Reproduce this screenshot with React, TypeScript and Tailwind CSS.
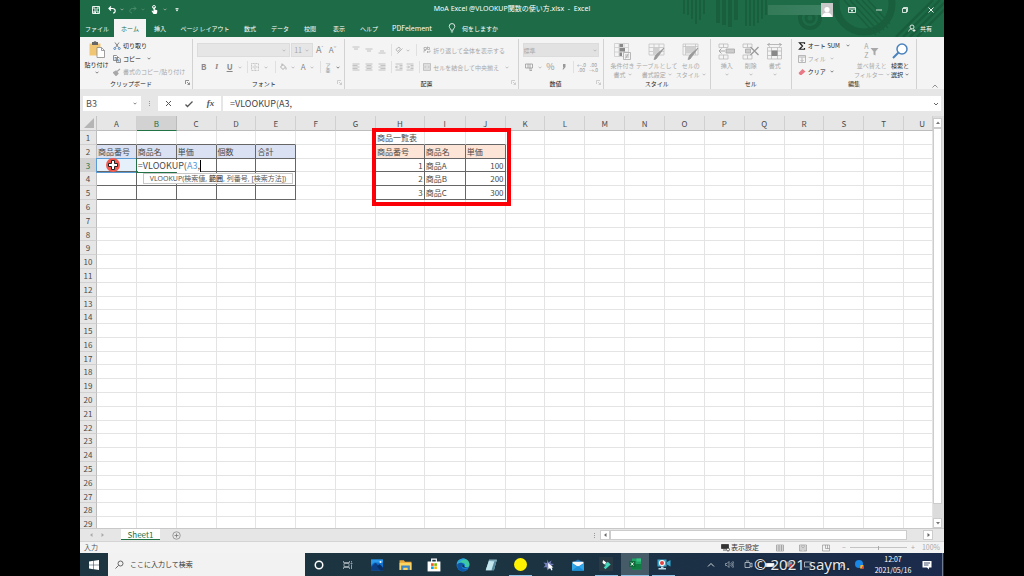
import { useState, type ReactNode } from "react";

const COLS = "ABCDEFGHIJKLMNOPQRSTU".split("");
const ROWS = Array.from({ length: 29 }, (_, i) => i + 1);

const VALUES: Record<string, string> = {
  A2: "商品番号", B2: "商品名", C2: "単価", D2: "個数", E2: "合計",
  H1: "商品一覧表",
  H2: "商品番号", I2: "商品名", J2: "単価",
  H3: "1", I3: "商品A", J3: "100",
  H4: "2", I4: "商品B", J4: "200",
  H5: "3", I5: "商品C", J5: "300",
};

function Caret({ dark = false, className = "" }: { dark?: boolean; className?: string }) {
  return (
    <svg viewBox="0 0 6 4" className={`h-[3px] w-1 shrink-0 ${dark ? "text-[#666]" : "text-[#b4b4b4]"} ${className}`}>
      <path d="M.8.8 3 3 5.2.8" fill="none" stroke="currentColor" strokeWidth="1.2" />
    </svg>
  );
}

function Ico({ children, className = "size-[9px]", box = "0 0 18 18" }: { children: ReactNode; className?: string; box?: string }) {
  return (
    <svg viewBox={box} className={`shrink-0 ${className}`} fill="none" stroke="currentColor" strokeWidth="1.6">
      {children}
    </svg>
  );
}

function Group({ label, launcher = false, children, dark = false }: { label: string; launcher?: boolean; dark?: boolean; children: ReactNode }) {
  return (
    <section aria-label={label} className="relative my-0.5 flex min-w-0 flex-col border-r border-[#d2d2d2]">
      <div className="flex min-h-0 flex-1">{children}</div>
      <div className={`flex h-2.5 items-center justify-center pb-0.5 text-[6px] text-[#222] ${launcher ? "pr-2.5" : ""}`}>{label}</div>
      {launcher && (
        <button aria-label={`${label}の設定`} className="absolute right-0.5 bottom-1">
          <Ico className={`size-[5px] ${dark ? "text-[#777]" : "text-[#c4c4c4]"}`} box="0 0 10 10">
            <path d="M1 8V1h7M4 4l5 5M9 5v4H5" />
          </Ico>
        </button>
      )}
    </section>
  );
}

function Big({ lines, children, active = false }: { lines: string[]; children: ReactNode; active?: boolean }) {
  return (
    <button className={`flex min-w-0 flex-1 flex-col items-center text-[6px] leading-[9px] whitespace-nowrap ${active ? "text-[#222]" : "text-[#a8a8a8]"}`}>
      <span className="flex h-5 items-center justify-center">{children}</span>
      <span>{lines[0]}</span>
      <span className="flex h-[9px] items-center gap-0.5">
        {lines[1]}
        <Caret dark={active} />
      </span>
    </button>
  );
}

function Tool({ label, w = "w-[13px]", children }: { label: string; w?: string; children: ReactNode }) {
  return (
    <button aria-label={label} className={`flex h-3 shrink-0 items-center justify-center ${w}`}>
      {children}
    </button>
  );
}

const Sep = () => <span className="mx-[3px] h-3 w-px shrink-0 bg-[#e0e0e0]" />;

function Lines({ d }: { d: string }) {
  return (
    <Ico className="size-2" box="0 0 16 16">
      <path d={d} strokeWidth="1.3" />
    </Ico>
  );
}

function TitleBar() {
  return (
    <header className="relative overflow-hidden bg-[#1e6c47] text-white">
      <svg viewBox="0 0 270 37" className="absolute top-0 right-0 h-[37px] w-[270px]" fill="none" stroke="#195f3d">
        <path d="M10 0v14M14 0v15M18 0v19M22 0v24M26 0v20M30 0v14" strokeWidth="2" />
        <path d="M44 0v23M50 0v25M56 0v27M62 0v20" strokeWidth="4" />
        <path d="M72 0v26M76 0v26M80 0v26M84 0v23M88 0v19M92 0v15" strokeWidth="2" />
        <circle cx="136" cy="18" r="10" strokeWidth="4" />
        <circle cx="136" cy="18" r="4" strokeWidth="3" />
        <circle cx="190" cy="4" r="28" strokeWidth="7" />
        <path d="M170 0l32 35M176 0l30 33M182 0l28 30M188 0l26 28M194 0l22 24" strokeWidth="1.5" />
        <path d="M222 37l37-37M229 37l37-37M236 37l37-37M243 37l37-37" strokeWidth="2.5" />
      </svg>
      <div className="relative grid h-[19px] grid-cols-[1fr_auto_1fr] items-center">
        <div className="flex items-center pl-3">
          <button aria-label="上書き保存">
            <Ico className="size-2" box="0 0 16 16">
              <path d="M1 1h14v14H1zM4 1v5h8V1M4 15v-5h8v5" strokeWidth="1.8" />
              <path d="M5 11h3v4H5z" fill="currentColor" stroke="none" />
            </Ico>
          </button>
          <button aria-label="元に戻す" className="ml-2 flex items-center gap-1">
            <Ico className="size-2" box="0 0 16 16">
              <path d="M6 1 2 5l4 4M2 5h7c7 0 7 9 1 9" strokeWidth="2.4" />
            </Ico>
            <Caret className="text-[#9cc0ae]" />
          </button>
          <button aria-label="やり直し" className="ml-[5px] flex items-center gap-1 text-[#4a8a6b]">
            <Ico className="size-2" box="0 0 16 16">
              <path d="m10 1 4 4-4 4M14 5H7c-7 0-7 9-1 9" strokeWidth="2" />
            </Ico>
            <Caret className="opacity-40" />
          </button>
          <button aria-label="タッチ/マウス モードの切り替え" className="ml-[5px] flex items-center gap-1">
            <Ico className="size-[9px]" box="0 0 16 18">
              <circle cx="7" cy="4" r="3" strokeWidth="1.8" />
              <path d="M6 4h2.5v5l5 1.500v4L12 18H6l-4-6 1-1 3 2z" fill="currentColor" stroke="none" />
            </Ico>
            <Caret />
          </button>
          <button aria-label="クイック アクセス ツール バーのカスタマイズ" className="ml-2">
            <Ico className="size-1" box="0 0 8 8"><path d="M1 1h6" /><path d="m1 3 3 4 3-4z" fill="currentColor" stroke="none" /></Ico>
          </button>
        </div>
        <h1 className="font-['Noto_Sans','Noto_Sans_CJK_JP',sans-serif] text-[7px] whitespace-pre">MoA Excel @VLOOKUP関数の使い方.xlsx  -  Excel</h1>
        <div className="flex items-center justify-end">
          <span className="h-2.5 w-[53px] bg-linear-to-r from-[#347a59] to-[#3b8060]" />
          <span className="flex h-3.5 w-3 items-end justify-center bg-[#c9c9c9]">
            <Ico className="size-3" box="0 0 12 12">
              <circle cx="6" cy="4.500" r="2.600" fill="#fff" stroke="none" />
              <path d="M1 12c0-6 10-6 10 0z" fill="#fff" stroke="none" />
            </Ico>
          </span>
          <button aria-label="リボンの表示オプション" className="ml-[15px]">
            <Ico className="h-1.5 w-2" box="0 0 16 12"><path d="M1 1h14v10H1zM1 4h14M8 10V6M6 8l2-2 2 2" /></Ico>
          </button>
          <button aria-label="最小化" className="ml-5"><Ico className="size-1.5" box="0 0 12 12"><path d="M0 6h12" /></Ico></button>
          <button aria-label="元に戻す (縮小)" className="ml-5"><Ico className="size-1.5" box="0 0 12 12"><path d="M1 3h8v8H1zM3 3V1h8v8H9" /></Ico></button>
          <button aria-label="閉じる" className="mr-2.5 ml-5"><Ico className="size-1.5" box="0 0 12 12"><path d="m1 1 10 10M11 1 1 11" strokeWidth="1.800" /></Ico></button>
        </div>
      </div>
      <nav aria-label="リボン タブ" className="relative flex h-[18px] items-stretch text-[6px] whitespace-nowrap">
        <button className="w-[34px]">ファイル</button>
        <button className="w-8 bg-[#f4f4f4] text-[#1e6c47]">ホーム</button>
        <button className="w-7">挿入</button>
        <button className="w-[62px]">ページ レイアウト</button>
        <button className="w-7">数式</button>
        <button className="w-8">データ</button>
        <button className="w-7">校閲</button>
        <button className="w-[30px]">表示</button>
        <button className="w-[30px]">ヘルプ</button>
        <button className="w-14 text-[7px]">PDFelement</button>
        <button className="ml-2 flex items-center gap-1.5">
          <Ico className="h-2.5 w-2" box="0 0 14 18">
            <path d="M5 13c0-3-3-4-3-7a5 5 0 0 1 10 0c0 3-3 4-3 7zM5 16h4" strokeWidth="1.500" />
          </Ico>
          何をしますか
        </button>
        <button className="mr-3 ml-auto flex items-center gap-1">
          <Ico className="size-2" box="0 0 16 16"><circle cx="8" cy="6" r="4" /><path d="M1 15c1-4 4-5 7-5M9 13h6M12 10v6" /></Ico>
          共有
        </button>
      </nav>
    </header>
  );
}

function Ribbon() {
  return (
    <div className="grid h-[52px] grid-cols-[113fr_152fr_173fr_85fr_107fr_81fr_125fr_27fr] bg-[#f4f4f4] text-[6px] whitespace-nowrap text-[#a8a8a8]">
      <Group label="クリップボード" launcher dark>
        <button className="flex w-[33px] shrink-0 flex-col items-center text-[#222]">
          <Ico className="mt-0.5 mb-0.5 h-[17px] w-4" box="0 0 32 34">
            <path d="M1 5h22v24H1z" fill="#f0c674" stroke="none" />
            <path d="M6 2h3l3-2 3 2h3v6H6z" fill="#666" stroke="none" />
            <path d="M16 13h9l6 6v14H16z" fill="#fff" stroke="#888" />
            <path d="M25 13v6h6" stroke="#888" />
          </Ico>
          貼り付け
          <Caret dark className="mt-0.5" />
        </button>
        <div className="flex flex-col text-[#222]">
          <button className="flex h-[13px] items-center gap-0.5">
            <Ico className="size-2" box="0 0 16 16"><path d="m4 1 7 10M12 1 5 11" stroke="#666" /><circle cx="3.500" cy="13" r="2" stroke="#3976b5" /><circle cx="12.500" cy="13" r="2" stroke="#3976b5" /></Ico>
            切り取り
          </button>
          <button className="flex h-[13px] items-center gap-0.5">
            <Ico className="size-2 text-[#777]" box="0 0 16 16"><path d="M1 1h6l2 2v8H1zM7 5h5l3 3v7H7z" fill="#fff" /><path d="M3 5h3M3 8h3M9 10h4M9 12h4" stroke="#3976b5" /></Ico>
            コピー
            <Caret dark className="ml-1" />
          </button>
          <button className="flex h-[13px] items-center gap-0.5 text-[#a8a8a8]">
            <Ico className="size-2" box="0 0 16 16"><path d="m1 9 5-3 4 5-4 4zM8 7l6-5" fill="currentColor" strokeWidth="2.500" /></Ico>
            書式のコピー/貼り付け
          </button>
        </div>
      </Group>

      <Group label="フォント" launcher>
        <div className="flex flex-col pl-1">
          <div className="mt-1 flex h-3.5 items-center">
            <span className="relative flex items-center">
              <select aria-label="フォント" className="h-3.5 w-[93px] appearance-none border border-[#dcdcdc] bg-[#e6e6e6]"><option value=""></option></select>
              <Caret className="absolute right-1" />
            </span>
            <span className="relative ml-px flex items-center">
              <select aria-label="フォント サイズ" className="h-3.5 w-[22px] appearance-none border border-[#dcdcdc] bg-[#e6e6e6] pl-0.5 text-[7px]"><option>11</option></select>
              <Caret className="absolute right-1" />
            </span>
            <Tool label="フォント サイズの拡大"><span className="text-[9px] text-[#888]">A</span><span className="mb-1 text-[5px]">ˆ</span></Tool>
            <Tool label="フォント サイズの縮小"><span className="text-[8px] text-[#888]">A</span><span className="mb-1 text-[5px]">ˇ</span></Tool>
          </div>
          <div className="mt-1 flex h-3 items-center text-[8px] text-[#888]">
            <Tool label="太字"><b>B</b></Tool>
            <Tool label="斜体"><i className="font-serif font-bold">I</i></Tool>
            <Tool label="下線"><u className="font-bold">U</u></Tool>
            <Tool label="下線の種類" w="w-2"><Caret /></Tool>
            <Sep />
            <Tool label="罫線" w="w-2"><Ico className="size-2 text-[#bbb]" box="0 0 16 16"><path d="M1 1h14v14H1zM8 1v14M1 8h14" strokeDasharray="2 1" /></Ico></Tool>
            <Tool label="罫線の種類"><Caret /></Tool>
            <Sep />
            <Tool label="塗りつぶしの色" w="w-2"><Ico className="size-2 text-[#999]" box="0 0 16 16"><path d="m3 8 5-5 5 5-5 5zM6 5V1M14 9v4" /></Ico></Tool>
            <Tool label="塗りつぶしの色の選択" w="w-3"><Caret /></Tool>
            <Tool label="フォントの色" w="w-2">A</Tool>
            <Tool label="フォントの色の選択" w="w-2.5"><Caret /></Tool>
            <Sep />
            <Tool label="ふりがな" w="w-2"><span className="flex flex-col text-[5px] leading-[5px]"><span>ア</span><span>亜</span></span></Tool>
            <Tool label="ふりがなの設定" w="w-3"><Caret dark /></Tool>
          </div>
        </div>
      </Group>

      <Group label="配置" launcher>
        <div className="flex flex-col pl-1">
          <div className="mt-1 flex h-3.5 items-center">
            <Tool label="上揃え"><Lines d="M1 2h14M4 6h8" /></Tool>
            <Tool label="上下中央揃え"><Lines d="M1 6h14M4 10h8" /></Tool>
            <Tool label="下揃え"><Lines d="M4 10h8M1 14h14" /></Tool>
            <Sep />
            <Tool label="方向" w="w-2"><Ico className="size-2" box="0 0 16 16"><path d="M2 7 8 2l3 4-6 5zM5 15 15 5" /></Ico></Tool>
            <Tool label="方向の種類" w="w-2.5"><Caret /></Tool>
            <Sep />
            <button className="ml-[3px] flex items-center gap-0.5">
              <Ico className="size-2" box="0 0 16 16"><path d="M2 3h5v4H2zM9 1v6h4V3H9M2 13V9h4M8 12h6V9M10 10l-2 2 2 2" /></Ico>
              折り返して全体を表示する
            </button>
          </div>
          <div className="mt-1 flex h-3 items-center">
            <Tool label="左揃え"><Lines d="M1 2h14M1 5h10M1 8h14M1 11h10M1 14h14" /></Tool>
            <Tool label="中央揃え"><Lines d="M1 2h14M3 5h10M1 8h14M3 11h10M1 14h14" /></Tool>
            <Tool label="右揃え"><Lines d="M1 2h14M5 5h10M1 8h14M5 11h10M1 14h14" /></Tool>
            <Sep />
            <Tool label="インデントを減らす" w="w-2"><Lines d="M1 2h14M9 5h6M9 8h6M9 11h6M1 14h14M7 8H1M4 5 1 8l3 3" /></Tool>
            <Tool label="インデントを増やす"><Lines d="M1 2h14M9 5h6M9 8h6M9 11h6M1 14h14M1 8h6M4 5l3 3-3 3" /></Tool>
            <Sep />
            <button className="flex items-center gap-0.5">
              <Ico className="size-2" box="0 0 16 16"><path d="M1 1h14v14H1zM1 4h14M1 12h14M3 8h10M5 6 3 8l2 2M11 6l2 2-2 2" strokeWidth="1.200" /></Ico>
              セルを結合して中央揃え
              <Caret className="ml-1" />
            </button>
          </div>
        </div>
      </Group>

      <Group label="数値" launcher>
        <div className="flex flex-col pl-1">
          <div className="relative mt-1 flex h-3.5 items-center">
            <select aria-label="表示形式" className="h-3.5 w-[76px] appearance-none border border-[#dcdcdc] bg-[#e2e2e2]"><option>標準</option></select>
            <Caret className="absolute right-1" />
          </div>
          <div className="mt-1 flex h-3 items-center text-[9px] text-[#999]">
            <Tool label="通貨表示形式"><Ico className="size-2" box="0 0 16 16"><path d="M1 2h14v8H1zM6 2v8M10 2v8M8 12h6M9 15h5" /></Ico></Tool>
            <Tool label="通貨の選択" w="w-2"><Caret /></Tool>
            <Tool label="パーセント スタイル" w="w-3.5">%</Tool>
            <Tool label="桁区切りスタイル" w="w-3"><Ico className="h-2 w-1.5" box="0 0 12 16"><path d="M4 2h5v6l-4 5H3l2-5H4z" fill="currentColor" stroke="none" /></Ico></Tool>
            <Sep />
            <Tool label="小数点以下の表示桁数を増やす" w="w-2.5"><span className="flex flex-col text-[5px] leading-[5px]"><span>←.0</span><span>.00</span></span></Tool>
            <Tool label="小数点以下の表示桁数を減らす" w="w-3.5"><span className="flex flex-col text-[5px] leading-[5px]"><span>.00</span><span>→.0</span></span></Tool>
          </div>
        </div>
      </Group>

      <Group label="スタイル">
        <div className="flex flex-1 px-0.5 pt-0.5">
          <Big lines={["条件付き", "書式"]}>
            <Ico className="size-[17px]" box="0 0 34 34"><path d="M1 1h28v26H1zM10 1v26M20 1v26M1 9h28M1 18h28" stroke="#ccc" /><path d="M11 2h7v6h-7zM11 10h11v7H11zM11 19h5v7h-5z" fill="#888" stroke="none" /><path d="M19 19h14v14H19z" fill="#f4f4f4" /><path d="M22 24h8M22 28h8M29 21l-6 10" /></Ico>
          </Big>
          <Big lines={["テーブルとして", "書式設定"]}>
            <Ico className="size-[17px]" box="0 0 34 34"><path d="M2 2h30v22H2zM12 2v22M22 2v22M2 9h30M2 17h30" stroke="#c4c4c4" /><path d="M10 9h12v14H10z" fill="#d0d0d0" stroke="none" /><path d="M32 10 22 24l-6 8-4 1 3-8 3-3z" fill="#999" stroke="#999" /></Ico>
          </Big>
          <Big lines={["セルの", "スタイル"]}>
            <Ico className="size-[17px]" box="0 0 34 34"><path d="M2 2h30v22H2zM2 7h30M7 2v22M27 2v22" stroke="#c4c4c4" /><path d="M8 8h19v13H8z" fill="#d0d0d0" stroke="none" /><path d="M32 10 22 24l-6 8-4 1 3-8 3-3z" fill="#999" stroke="#999" /></Ico>
          </Big>
        </div>
      </Group>

      <Group label="セル">
        <div className="flex flex-1 px-1 pt-0.5">
          <Big lines={["挿入", ""]}>
            <Ico className="size-[17px]" box="0 0 34 34"><path d="M2 2h18v7H2zM11 2v7M2 24h18v8H2zM11 24v8" stroke="#bbb" /><path d="M16 12h17v8H16z" fill="#ccc" /><path d="M14 16H2M7 11l-5 5 5 5" strokeWidth="2" /></Ico>
          </Big>
          <Big lines={["削除", ""]}>
            <Ico className="size-[17px]" box="0 0 34 34"><path d="M2 2h18v7H2zM11 2v7M2 24h18v8H2zM11 24v8" stroke="#bbb" /><path d="M7 12h10v8H7z" fill="#ccc" /><path d="m17 8 16 16M33 8 17 24" stroke="#999" strokeWidth="2.500" /></Ico>
          </Big>
          <Big lines={["書式", ""]}>
            <Ico className="size-[17px]" box="0 0 34 34"><path d="M3 9h28v23H3zM3 16h28M3 25h28M11 9v23M23 9v23" stroke="#bbb" /><path d="M11 15h12v11H11z" fill="#888" stroke="none" /><path d="M3 3h28M8 0 3 3l5 4M26 0l5 3-5 4" /></Ico>
          </Big>
        </div>
      </Group>

      <Group label="編集">
        <div className="flex flex-1 pl-1.5">
          <div className="flex w-[60px] flex-col text-[#222]">
            <button className="flex h-[13px] items-center gap-0.5">
              <Ico className="size-2" box="0 0 16 16"><path d="M13 4V1.500H3L9 8l-6 6.500h10V12" strokeWidth="2.400" /></Ico>
              オート SUM
              <Caret dark className="ml-1" />
            </button>
            <button className="flex h-[13px] items-center gap-0.5 text-[#a8a8a8]">
              <Ico className="size-2" box="0 0 16 16"><path d="M1 1h14v14H1zM1 4h14M8 5v8M5 10l3 3 3-3" /></Ico>
              フィル
              <Caret className="ml-0.5" />
            </button>
            <button className="flex h-[13px] items-center gap-0.5">
              <Ico className="size-2" box="0 0 16 16"><path d="m1 10 8-8 6 5-8 7H4z" fill="#e87885" stroke="none" /></Ico>
              クリア
              <Caret dark className="ml-0.5" />
            </button>
          </div>
          <div className="flex flex-1 pt-0.5 pr-0.5">
            <Big lines={["並べ替えと", "フィルター"]}>
              <span className="flex items-center gap-0.5">
                <span className="flex flex-col text-[7px] leading-[9px]"><span>A</span><span>Z</span></span>
                <Ico className="size-[9px]" box="0 0 18 18"><path d="M1 2h16l-6 7v8l-4-2V9z" fill="currentColor" stroke="none" /></Ico>
              </span>
            </Big>
            <Big active lines={["検索と", "選択"]}>
              <Ico className="size-4" box="0 0 32 32"><circle cx="20" cy="12" r="10" fill="#fff" stroke="#4a82bd" strokeWidth="3" /><path d="M13 19 2 30" stroke="#4a82bd" strokeWidth="4" /></Ico>
            </Big>
          </div>
        </div>
      </Group>
      <div className="flex items-end justify-end pr-1.5 pb-0.5">
        <button aria-label="リボンを折りたたむ"><Ico className="size-1.5 text-[#777]" box="0 0 12 12"><path d="m1 9 5-5 5 5" /></Ico></button>
      </div>
    </div>
  );
}

function FormulaBar({ formula, onChange }: { formula: string; onChange: (v: string) => void }) {
  return (
    <div className="flex h-[27px] items-center bg-[#e6e6e6] px-[3px] pt-0.5">
      <label className="relative flex items-center">
        <input aria-label="名前ボックス" defaultValue="B3" className="h-[15px] w-[58px] bg-white pl-[3px] text-[9px] text-[#555] outline-none" />
        <Caret dark className="absolute right-1" />
      </label>
      <span className="mx-2 flex flex-col gap-px">
        <i className="size-px bg-[#999]" /><i className="size-px bg-[#999]" /><i className="size-px bg-[#999]" />
      </span>
      <div className="flex h-[15px] w-[63px] items-center justify-around bg-white text-[#555]">
        <button aria-label="キャンセル"><Ico className="size-[7px]" box="0 0 14 14"><path d="m2 2 10 10M12 2 2 12" strokeWidth="2" /></Ico></button>
        <button aria-label="入力"><Ico className="size-2" box="0 0 16 16"><path d="m1 9 4 4L15 3" strokeWidth="2.600" /></Ico></button>
        <button aria-label="関数の挿入" className="font-['Liberation_Serif',serif] text-[9px] leading-none font-bold italic">fx</button>
      </div>
      <div className="relative ml-0.5 flex flex-1 items-center">
        <input aria-label="数式バー" value={formula} onChange={(e) => onChange(e.target.value)} className="h-[15px] w-full bg-white pl-[7px] text-[9px] text-[#444] outline-none" />
        <Ico className="absolute right-0.5 size-1.5 text-[#666]" box="0 0 12 12"><path d="m2 4 4 4 4-4" strokeWidth="2" /></Ico>
      </div>
    </div>
  );
}

function cellClass(col: string, row: number): string {
  const left = "ABCDE".includes(col) && row >= 2 && row <= 5;
  const right = "HIJ".includes(col) && row >= 2 && row <= 5;
  const edge =
    left || right
      ? "border-[#666]"
      : row === 1 && "ABCDEHIJ".includes(col)
        ? "border-r-[#e4e4e4] border-b-[#666]"
        : "border-[#e4e4e4]";
  const fill =
    row === 2 && left ? "bg-[#d9e1f2]" : row === 2 && right ? "bg-[#fce4d6]" : col === "A" && row === 3 ? "bg-[#e6f0fa]" : "bg-white";
  const align = (col === "H" || col === "J") && row >= 3 && row <= 5 ? "text-right" : "text-left";
  return `${edge} ${fill} ${align}`;
}

function Sheet({ formula }: { formula: string }) {
  return (
    <div className="flex min-h-0 flex-1 bg-[#e6e6e6]">
      <div className="relative min-w-0 flex-1 overflow-hidden">
        <table className="grid h-[415px] grid-cols-[17px_repeat(7,40fr)_49fr_41fr_repeat(11,40fr)_29fr] grid-rows-[15px_repeat(29,minmax(0,1fr))] text-[8px] leading-[13px] whitespace-nowrap text-[#4a4a4a]">
          <thead className="contents">
            <tr className="contents">
              <th className="flex items-end justify-end border-r border-b border-[#c4c4c4] p-0.5" aria-label="すべて選択">
                <svg viewBox="0 0 10 10" className="size-2.5"><path d="M10 0v10H0z" fill="#b5b5b5" /></svg>
              </th>
              {COLS.map((c) => (
                <th key={c} scope="col" className={`border-r border-b text-center leading-[15px] font-normal ${c === "B" ? "border-r-[#bbb] border-b-[#217346] bg-[#d2d2d2] text-[#217346]" : "border-r-[#d0d0d0] border-b-[#bdbdbd]"} ${c === "U" ? "pl-2" : ""}`}>
                  {c}
                </th>
              ))}
            </tr>
          </thead>
          <tbody className="contents">
            {ROWS.map((r) => (
              <tr key={r} className="contents">
                <th scope="row" className={`border-r border-b border-b-[#d0d0d0] text-center font-normal ${r === 3 ? "border-r-[#217346] bg-[#d2d2d2] text-[#217346]" : "border-r-[#bdbdbd]"}`}>
                  {r}
                </th>
                {COLS.map((c) => (
                  <td key={c} className={`min-w-0 border-r border-b px-px ${cellClass(c, r)}`}>
                    {c === "B" && r === 3 ? (
                      <span className="relative z-10 inline-block border-r border-black bg-white text-[9px] leading-3">
                        {formula.split("A3")[0]}
                        <span className="text-[#5b9bd5]">A3</span>
                        {formula.split("A3")[1]}
                      </span>
                    ) : (
                      VALUES[c + r]
                    )}
                  </td>
                ))}
              </tr>
            ))}
          </tbody>
        </table>
        <div className="absolute top-[42px] left-4 h-[15px] w-[41px] border border-[#5b9bd5]" />
        <div className="absolute top-[42px] left-14 h-[15px] w-[41px] border border-[#217346] border-t-[#666] border-r-transparent" />
        <div role="tooltip" className="absolute top-[57px] left-[63px] z-20 h-[11px] w-[150px] border border-[#c8c8c8] bg-white text-center font-['Noto_Sans','Noto_Sans_CJK_JP',sans-serif] text-[7px] leading-[9px] whitespace-nowrap text-[#555]">
          VLOOKUP(検索値, <b>範囲</b>, 列番号, [検索方法])
        </div>
        <div className="absolute top-[42px] left-[26px] z-20 flex size-3.5 items-center justify-center rounded-full bg-[#f25a50]">
          <svg viewBox="0 0 20 20" className="size-2.5"><path d="M7 1h6v6h6v6h-6v6H7v-6H1V7h6z" fill="#fff" stroke="#222" strokeWidth="2" /></svg>
        </div>
        <div className="absolute top-[12px] left-[292px] z-20 h-[78px] w-[139px] border-4 border-[#fb0007]" />
      </div>
      <div className="flex w-[11px] flex-col bg-[#dcdcdc] pt-0.5 pr-0.5 text-[#777]">
        <button aria-label="上へスクロール" className="flex h-2.5 items-center justify-center border border-[#ccc] bg-white">
          <svg viewBox="0 0 8 8" className="size-1"><path d="m0 6 4-5 4 5z" fill="currentColor" /></svg>
        </button>
        <div className="mb-3.5 flex-1 border border-[#ccc] bg-white" />
        <button aria-label="下へスクロール" className="flex h-2.5 items-center justify-center border border-[#ccc] bg-white">
          <svg viewBox="0 0 8 8" className="size-1"><path d="m0 2 4 5 4-5z" fill="currentColor" /></svg>
        </button>
      </div>
    </div>
  );
}

function SheetTabs() {
  return (
    <div className="flex h-[13px] items-stretch border-t border-[#c8c8c8] bg-[#e6e6e6] pr-[11px] text-[#aaa]">
      <div className="flex w-[41px] items-center gap-2 pl-2.5">
        <svg viewBox="0 0 6 8" className="h-1 w-[3px]"><path d="M5 0v8L0 4z" fill="currentColor" /></svg>
        <svg viewBox="0 0 6 8" className="h-1 w-[3px]"><path d="M1 0v8l5-4z" fill="currentColor" /></svg>
      </div>
      <button className="h-[11px] w-[39px] border-b border-[#217346] bg-white text-[8px] leading-[9px] text-[#217346]">Sheet1</button>
      <button aria-label="新しいシート" className="ml-3 flex items-center"><Ico className="size-[9px] text-[#777]"><circle cx="9" cy="9" r="7.500" strokeWidth="1.300" /><path d="M9 5v8M5 9h8" /></Ico></button>
      <div className="mr-[5px] ml-auto flex flex-col justify-center gap-px">
        <i className="size-px bg-[#999]" /><i className="size-px bg-[#999]" /><i className="size-px bg-[#999]" />
      </div>
      <div className="flex w-[39%] items-stretch py-px">
        <button aria-label="左へスクロール" className="flex w-2.5 items-center justify-center border border-[#ccc] bg-white text-[#666]">
          <svg viewBox="0 0 6 8" className="h-1 w-[3px]"><path d="M5 0v8L0 4z" fill="currentColor" /></svg>
        </button>
        <div className="mr-4 flex-1 border border-[#ccc] bg-white" />
        <button aria-label="右へスクロール" className="flex w-2.5 items-center justify-center border border-[#ccc] bg-white text-[#666]">
          <svg viewBox="0 0 6 8" className="h-1 w-[3px]"><path d="M1 0v8l5-4z" fill="currentColor" /></svg>
        </button>
      </div>
    </div>
  );
}

function StatusBar() {
  return (
    <div className="flex h-3 items-center border-t border-[#d4d4d4] bg-[#f3f3f3] pr-1 pl-1 text-[7px] text-[#555]">
      <span>入力</span>
      <button className="ml-auto flex items-center gap-px text-[#333]">
        <Ico className="size-[9px]"><path d="M1 3h14v8H1zM4 14h6" fill="currentColor" /><circle cx="14" cy="13" r="3" fill="#fff" /></Ico>
        表示設定
      </button>
      <button aria-label="標準" className="ml-[17px]"><Ico className="size-2 text-[#888]" box="0 0 16 16"><path d="M1 2h14v12H1zM1 6h14M1 10h14M6 2v12M11 2v12" strokeWidth="1.200" /></Ico></button>
      <button aria-label="ページ レイアウト" className="ml-[15px]"><Ico className="size-2 text-[#888]" box="0 0 16 16"><path d="M1 2h14v12H1zM4 4h8v10M4 14V4M6 7h4M6 10h4" strokeWidth="1.200" /></Ico></button>
      <button aria-label="改ページ プレビュー" className="ml-[15px]"><Ico className="size-2 text-[#888]" box="0 0 16 16"><path d="M1 2h14v12H1zM7 2v7h8M11 2v7" strokeWidth="1.200" /></Ico></button>
      <span className="ml-3 text-[#aaa]">−</span>
      <input type="range" aria-label="ズーム" min={10} max={190} defaultValue={100} className="mx-1 h-px w-[57px] appearance-none bg-[#c4c4c4] [&::-webkit-slider-thumb]:h-1 [&::-webkit-slider-thumb]:w-px [&::-webkit-slider-thumb]:appearance-none [&::-webkit-slider-thumb]:bg-[#aaa]" />
      <span className="text-[#aaa]">+</span>
      <span className="ml-[7px] text-[#aaa]">100%</span>
    </div>
  );
}

function TaskbarApp({ label, children, state = "" }: { label: string; children: ReactNode; state?: string }) {
  return (
    <button aria-label={label} className="flex min-w-0 flex-1 items-stretch justify-center px-0.5">
      <span className={`flex flex-1 items-center justify-center ${state}`}>{children}</span>
    </button>
  );
}

function Taskbar() {
  const open = "border-b border-[#8fc3e8] mx-px";
  return (
    <footer className="relative flex h-[23px] items-stretch bg-linear-to-r from-[#1d3540] via-[#1c3441] to-[#1b2a4c] text-white">
      <button aria-label="スタート" className="flex w-7 items-center justify-center">
        <svg viewBox="0 0 20 20" className="size-2.5" fill="#fff"><path d="M0 3l9-1.300V9.500H0zM10 1.500 20 0v9.500H10zM0 10.500h9v7.800L0 17zM10 10.500h10V20l-10-1.500z" /></svg>
      </button>
      <label className="flex w-[197px] items-center gap-1.5 bg-[#f2f2f2] pl-[7px] text-[#444]">
        <Ico className="size-[9px]"><circle cx="11" cy="7" r="5" /><path d="m7 11-6 6" /></Ico>
        <input placeholder="ここに入力して検索" className="min-w-0 flex-1 bg-transparent text-[7px] outline-none placeholder:text-[#333]" />
      </label>
      <div className="flex w-[373px] items-stretch">
        <TaskbarApp label="Cortana"><Ico className="size-2.5" box="0 0 20 20"><circle cx="10" cy="10" r="7.500" strokeWidth="3" /></Ico></TaskbarApp>
        <TaskbarApp label="タスク ビュー"><Ico className="size-2.5 text-[#aebbc1]" box="0 0 20 20"><path d="M1 2v3h12V2M1 18v-3h12v3M2 7h10v6H2zM17 2v3M17 9v9M15 7h4" /></Ico></TaskbarApp>
        <TaskbarApp label="フォト">
          <svg viewBox="0 0 24 24" className="size-3"><path d="M0 1h24v22H0z" fill="#1273ce" /><path d="M0 16 9 7l15 16H0z" fill="#0b3f86" /><path d="m12 15 5-5 7 7v6h-5z" fill="#0a2f66" /><path d="M0 1h24v6H6L0 12z" fill="#2b9aec" /><circle cx="19" cy="6" r="2" fill="#fff" /></svg>
        </TaskbarApp>
        <TaskbarApp label="エクスプローラー">
          <svg viewBox="0 0 24 22" className="h-3 w-[13px]"><path d="M1 2h8l2 3h12v15H1z" fill="#e9a93a" /><path d="M1 7h22v13H1z" fill="#fcd462" /><path d="M4 12h16v8h-4v-4H8v4H4z" fill="#3a86c8" /></svg>
        </TaskbarApp>
        <TaskbarApp label="Microsoft Store">
          <svg viewBox="0 0 24 24" className="size-3.5"><path d="M8 7V2h8v5" fill="none" stroke="#fff" strokeWidth="2" /><path d="M1 6h22v17H1z" fill="#fff" /><path d="M7 9h4.500v4.500H7z" fill="#f25022" /><path d="M12.500 9H17v4.500h-4.500z" fill="#7fba00" /><path d="M7 14.500h4.500V19H7z" fill="#00a4ef" /><path d="M12.500 14.500H17V19h-4.500z" fill="#ffb900" /></svg>
        </TaskbarApp>
        <TaskbarApp label="Microsoft Edge">
          <svg viewBox="0 0 24 24" className="size-3.5"><circle cx="12" cy="12" r="11" fill="#1680d6" /><path d="M3 6C8-2 24 0 23 12c0 4-6 5-8 3 2-4-1-7-5-7-3 0-6 1-8 4 0-3 0-4 1-6z" fill="#3ec9a5" /><path d="M3 6C7-1 15 0 18 3c-5-1-11 1-16 9 0-3 0-4 1-6z" fill="#2aa5e0" /><path d="M2 11c3-4 9-4 11 0-3 0-4 3-3 5 2 4 8 4 11 2-6 8-19 6-19-7z" fill="#0f58a8" /><path d="M13 11c-3 0-3 4-1 5 3 1 6 1 9-1-2 1-6 1-7-1 0-1 0-2-1-3z" fill="#1c3441" /></svg>
        </TaskbarApp>
        <TaskbarApp label="メモ帳">
          <svg viewBox="0 0 24 24" className="size-3.5"><path d="M9 3h13l-5 18H3z" fill="#a9d7e5" /><path d="m9 3 9 3-5 15H3z" fill="#c4e6ee" /><path d="m18 5 4-2-5 18-4-1z" fill="#56879a" /><path d="m9 3 13 0-1 3-13-1z" fill="#7fa9b8" /></svg>
        </TaskbarApp>
        <TaskbarApp label="ハイライター" state={open}><span className="size-[13px] rounded-full bg-[#fff200]" /></TaskbarApp>
        <TaskbarApp label="ポインター">
          <svg viewBox="0 0 24 24" className="size-3"><path d="m9 1 2 6 6-4-2 6 7 1-6 4 3 6-7-3-3 6-2-7-6 1 4-5-4-5 7 1z" fill="#7681bd" /><path d="m10 8 1 13 3-3 3 5 2-1-2-5h4z" fill="#fff" /></svg>
        </TaskbarApp>
        <TaskbarApp label="メール">
          <svg viewBox="0 0 24 22" className="h-3 w-3.5"><path d="M1 7h22v14H1z" fill="#1c8ed8" /><path d="M1 7 12 1l11 6-11 7z" fill="#1371bd" /><path d="M2 5h20v3l-10 6L2 8z" fill="#f4f8fb" /><path d="m1 8 11 7L23 8v13H1z" fill="#31a7e8" /><path d="m1 21 11-8 11 8z" fill="#1c8ed8" /></svg>
        </TaskbarApp>
        <TaskbarApp label="Filmora" state={open}>
          <svg viewBox="0 0 24 24" className="size-3.5"><path d="M0 0h24v24H0z" fill="#2a3a44" /><path d="m7 5 6 5-4 3-3-3z" fill="#fff" /><path d="m9 14 6-6 5 5-9 8-3-3 4-4z" fill="#43d6bb" /></svg>
        </TaskbarApp>
        <TaskbarApp label="Excel" state="-mx-0.5 border-b border-[#8fc3e8] bg-[#455b68]">
          <svg viewBox="0 0 26 24" className="h-3 w-3.5"><path d="M7 1h18v22H7z" fill="#21a366" /><path d="M16 1h9v6h-9z" fill="#33c481" /><path d="M7 12h18v11H7z" fill="#107c41" /><path d="M1 6h13v12H1z" fill="#0e6b39" /><path d="m5 9 5 6M10 9l-5 6" stroke="#fff" strokeWidth="2" /></svg>
        </TaskbarApp>
        <TaskbarApp label="画面録画" state={open}>
          <svg viewBox="0 0 28 24" className="h-3 w-3.5"><path d="M1 3h18v14H1zM20 8l7-4v13l-7-4z" fill="#39a9d0" /><path d="M8 17h5v3h5v3H3v-3h5z" fill="#b8d8e5" /><circle cx="10" cy="10" r="6" fill="#fff" /><circle cx="10" cy="10" r="4" fill="#e24141" /></svg>
        </TaskbarApp>
      </div>
      <div className="ml-auto flex items-center">
        <button aria-label="隠れているインジケーターを表示します"><Ico className="size-2" box="0 0 16 16"><path d="m2 11 6-6 6 6" /></Ico></button>
        <button aria-label="スピーカー" className="ml-2.5"><Ico className="size-[9px] text-[#c4ccd2]"><path d="M1 7h3l4-4v12l-4-4H1zM11 6c2 2 2 4 0 6M13 4c3 3 3 7 0 10M15 2c4 4 4 10 0 14" strokeWidth="1.200" /></Ico></button>
        <button aria-label="会議" className="ml-2.5"><Ico className="size-[9px] text-[#c4ccd2]"><path d="M2 5h10v10H2zM12 8l4-2v8l-4-2M4 2h6" /></Ico></button>
        <button aria-label="バッテリー" className="ml-3"><Ico className="h-1 w-2.5" box="0 0 20 8"><path d="M1 1h17v6H1z" fill="#fff" /></Ico></button>
        <button aria-label="通知アプリ" className="ml-2.5"><svg viewBox="0 0 16 16" className="size-[9px]"><path d="M1 3h12v9H1z" fill="#8fa0b3" /><circle cx="11" cy="11" r="4" fill="#e84040" /></svg></button>
        <button aria-label="ディスプレイ" className="ml-2.5"><Ico className="size-2 text-[#c4ccd2]" box="0 0 16 16"><path d="M1 2h14v10H1z" /></Ico></button>
        <button aria-label="日本語入力" className="ml-7 text-[8px]">A</button>
        <button aria-label="クラウド アプリ" className="ml-2.5"><svg viewBox="0 0 18 18" className="size-[9px]"><circle cx="8" cy="8" r="8" fill="#1987e5" /><path d="M11 10h6v7h-7z" fill="#f0b429" /><path d="M14 13h4v4h-4z" fill="#e5403c" /></svg></button>
        <time dateTime="2021-05-16T12:07" className="ml-2 flex w-[42px] flex-col items-center text-[7px] leading-[11px]"><span>12:07</span><span>2021/05/16</span></time>
        <button aria-label="通知" className="ml-2"><Ico className="size-2.5" box="0 0 20 20"><path d="M1 2h18v13h-5v4l-4-4H1z" fill="#fff" stroke="none" /><path d="M4 6h12M4 10h9" stroke="#1b2a4c" /></Ico></button>
        <span className="ml-2.5 h-[23px] w-0.5 border-l border-[#6d7a90]" />
      </div>
      <div className="pointer-events-none absolute right-[94px] bottom-0.5 font-['Noto_Sans',sans-serif] text-[15px] leading-5 whitespace-nowrap text-white/90 [text-shadow:0_0_2px_#000]">© 2021 saym.</div>
    </footer>
  );
}

export default function App() {
  const [formula, setFormula] = useState("=VLOOKUP(A3,");
  return (
    <div className="h-screen bg-black px-20">
      <main lang="ja" className="flex h-full flex-col overflow-hidden bg-[#e6e6e6] font-['Noto_Sans_CJK_JP',sans-serif]">
        <TitleBar />
        <Ribbon />
        <FormulaBar formula={formula} onChange={setFormula} />
        <Sheet formula={formula} />
        <SheetTabs />
        <StatusBar />
        <Taskbar />
      </main>
    </div>
  );
}
